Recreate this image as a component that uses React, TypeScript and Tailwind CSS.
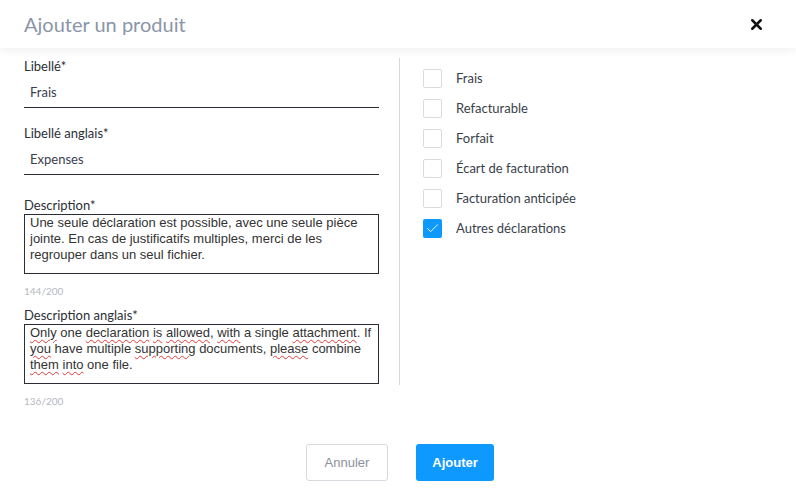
import { Check, X } from 'lucide-react';
import type { ReactNode } from 'react';

const checks = [
  { label: 'Frais', checked: false },
  { label: 'Refacturable', checked: false },
  { label: 'Forfait', checked: false },
  { label: 'Écart de facturation', checked: false },
  { label: 'Facturation anticipée', checked: false },
  { label: 'Autres déclarations', checked: true },
];

const labelCls = "text-[13px] leading-[16px] text-[#2b2f36] font-['Lato',sans-serif]";

const TextField = ({ label, value }: { label: string; value: string }) => (
  <div>
    <div className={labelCls}>{label}</div>
    <div className="mt-[9px] h-[25px] border-b border-[#2a2d33] pl-[6px] pt-[1px] text-[13px] leading-[16px] text-[#3b4150] font-['Lato',sans-serif]">
      {value}
    </div>
  </div>
);

const TextArea = ({ label, children, count }: { label: string; children: ReactNode; count: string }) => (
  <div>
    <div className={labelCls}>{label}</div>
    <div className="mt-[1px] h-[60px] border border-[#2a2d33] px-[5px] text-[13px] leading-[16px] text-[#333] font-['Liberation_Sans',sans-serif]">
      {children}
    </div>
    <div className="mt-[11px] text-[10px] leading-[12px] text-[#b4b8bf] font-['Lato',sans-serif]">{count}</div>
  </div>
);

// misspelled words, flagged by the browser spellchecker
const W = ({ children }: { children: ReactNode }) => (
  <span className="underline decoration-wavy decoration-[#e53935] decoration-[1px] underline-offset-[2px]">{children}</span>
);

export default function App() {
  return (
    <div className="w-[796px] h-[492px] bg-white relative overflow-hidden">
      {/* Header */}
      <div className="h-[48px] flex items-center justify-between pl-[24px] pr-[31px] bg-white shadow-[0_3px_8px_rgba(0,0,0,0.06)] relative z-10">
        <h1 className="text-[20px] text-[#8b95a8] font-['Lato',sans-serif]">Ajouter un produit</h1>
        <X className="w-[17px] h-[17px] text-[#111]" strokeWidth={3.5} />
      </div>

      {/* Body */}
      <div className="flex pt-[10px]">
        <div className="w-[400px] h-[327px] pl-[24px] pr-[20px] border-r border-[#d8d8d8] flex flex-col">
          <TextField label="Libellé*" value="Frais" />
          <div className="mt-[17px]">
            <TextField label="Libellé anglais*" value="Expenses" />
          </div>
          <div className="mt-[22px]">
            <TextArea label="Description*" count="144/200">
              Une seule déclaration est possible, avec une seule pièce jointe. En cas de justificatifs multiples, merci de les regrouper dans un seul fichier.
            </TextArea>
          </div>
          <div className="mt-[10px]">
            <TextArea label="Description anglais*" count="136/200">
              <W>Only</W> one <W>declaration</W> <W>is</W> <W>allowed</W>, <W>with</W> a single <W>attachment</W>. If{' '}
              <W>you</W> have multiple <W>supporting</W> documents, <W>please</W> combine <W>them</W> <W>into</W> one file.
            </TextArea>
          </div>
        </div>

        <div className="pl-[23px] pt-[11px] flex flex-col gap-[11px]">
          {checks.map((c) => (
            <div key={c.label} className="flex items-center h-[19px]">
              {c.checked ? (
                <div className="w-[19px] h-[19px] rounded-[2px] bg-[#0d99ff] flex items-center justify-center">
                  <Check className="w-[15px] h-[15px] text-white" strokeWidth={1.5} />
                </div>
              ) : (
                <div className="w-[19px] h-[19px] rounded-[2px] border border-[#d9dbe0] bg-white" />
              )}
              <span className="ml-[14px] text-[13px] text-[#3a3f4a] font-['Lato',sans-serif]">{c.label}</span>
            </div>
          ))}
        </div>
      </div>

      {/* Footer */}
      <div className="flex justify-center gap-[28px] mt-[59px] pl-[4px]">
        <button className="w-[82px] h-[37px] rounded-[3px] border border-[#d6d9de] bg-white text-[13px] text-[#8a909c] font-['Liberation_Sans',sans-serif]">
          Annuler
        </button>
        <button className="w-[78px] h-[37px] rounded-[3px] bg-[#0d99ff] text-[13px] font-bold text-white font-['Liberation_Sans',sans-serif]">
          Ajouter
        </button>
      </div>
    </div>
  );
}
